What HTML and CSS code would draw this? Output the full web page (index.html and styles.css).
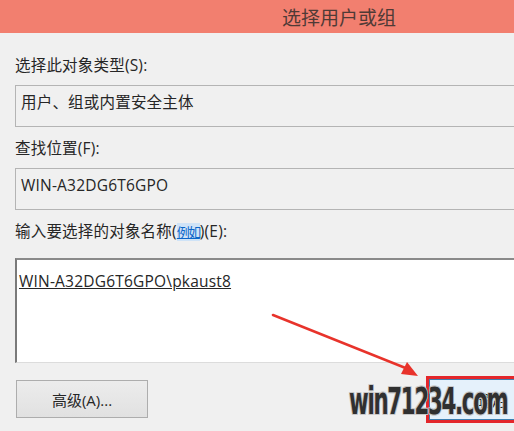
FILE: index.html
```html
<!DOCTYPE html>
<html lang="zh-CN">
<head>
<meta charset="utf-8">
<title>选择用户或组</title>
<link rel="stylesheet" href="styles.css">
</head>
<body>
<div class="window">
  <header class="titlebar"><span class="title">选择用户或组</span></header>
  <main class="content">
    <div class="label first">选择此对象类型(S):</div>
    <div class="field">用户、组或内置安全主体</div>
    <div class="label">查找位置(F):</div>
    <div class="field">WIN-A32DG6T6GPO</div>
    <div class="label">输入要选择的对象名称(<a class="link">例如</a>)(E):</div>
    <div class="names"><span class="name">WIN-A32DG6T6GPO\pkaust8</span></div>
    <div class="buttons">
      <button class="btn adv">高级(A)...</button>
      <button class="btn ok">确定</button>
    </div>
  </main>
  <svg class="arrow" width="514" height="431" viewBox="0 0 514 431">
    <line x1="273" y1="315" x2="408" y2="369" stroke="#e8332b" stroke-width="2.5" stroke-linecap="round"/>
    <polygon points="418,376 401,374 407,362" fill="#e8332b"/>
  </svg>
  <div class="watermark">win71234.com</div>
</div>
</body>
</html>
```
FILE: styles.css
```css
html, body {
  margin: 0;
  padding: 0;
  overflow: hidden;
  background: #f0f0f0;
}
.window {
  position: relative;
  width: 514px;
  height: 431px;
  overflow: hidden;
  font-family: "Open Sans", "Noto Sans CJK SC", sans-serif;
  font-size: 15.5px;
  letter-spacing: 0.2px;
  color: #262626;
}
.titlebar {
  height: 33px;
  background: #f27f6f;
  display: flex;
  align-items: center;
  padding-left: 282px;
}
.title {
  font-family: "Noto Sans CJK SC", sans-serif;
  font-size: 19px;
  letter-spacing: 0;
  color: #4f3a36;
  line-height: 1;
}
.content {
  padding: 0 0 0 15px;
}
.label {
  line-height: 20px;
  height: 20px;
  margin-top: 11px;
  margin-bottom: 10px;
  white-space: nowrap;
}
.label.first {
  margin-top: 22px;
}
.link {
  color: #0b66c9;
  text-decoration: underline;
  background: #cfe3f7;
  font-size: 13px;
  letter-spacing: -1.5px;
}
.field {
  border: 1px solid #b4b4b4;
  margin-right: -10px;
  padding: 6px 0 0 5px;
  box-sizing: border-box;
  height: 42px;
  line-height: 20px;
  background: #f0f0f0;
  white-space: nowrap;
}
.names {
  margin-top: 17px;
  height: 105px;
  box-sizing: border-box;
  border-top: 2px solid #8a8a8a;
  border-left: 2px solid #7a7a7a;
  border-bottom: 1px solid #dcdcdc;
  background: #fff;
  margin-right: -10px;
  padding: 11px 0 0 2px;
  line-height: 20px;
}
.name {
  text-decoration: underline;
  color: #262626;
}
.buttons {
  display: flex;
  justify-content: space-between;
  align-items: flex-start;
  margin-top: 17px;
  margin-right: -30px;
}
.btn {
  font-family: "Open Sans", "Noto Sans CJK SC", sans-serif;
  font-size: 15px;
  color: #262626;
  padding: 0;
}
.adv {
  margin-left: 1px;
  width: 132px;
  height: 38px;
  background: linear-gradient(#ececec, #e1e1e1);
  border: 1px solid #adadad;
}
.ok {
  margin-top: -1px;
  width: 115px;
  height: 41px;
  background: #e5f1fb;
  border: 1px solid #3c7fb1;
  outline: 3px solid #e3262b;
  outline-offset: 0;
  text-align: left;
  padding-left: 46px;
}
.arrow {
  position: absolute;
  left: 0;
  top: 0;
  pointer-events: none;
}
.watermark {
  position: absolute;
  left: 349px;
  top: 382px;
  font-family: "DejaVu Sans Condensed", "DejaVu Sans", sans-serif;
  font-stretch: condensed;
  font-weight: bold;
  font-size: 37px;
  line-height: 40px;
  letter-spacing: -2px;
  color: #303030;
  transform-origin: left top;
  transform: scaleX(0.64);
  -webkit-text-stroke: 1px #9a9a9a;
  paint-order: stroke fill;
  text-shadow: 1px 1px 0 #c8c8c8, -1px -1px 0 #c8c8c8, 1px -1px 0 #c8c8c8, -1px 1px 0 #c8c8c8;
  white-space: nowrap;
}
```
